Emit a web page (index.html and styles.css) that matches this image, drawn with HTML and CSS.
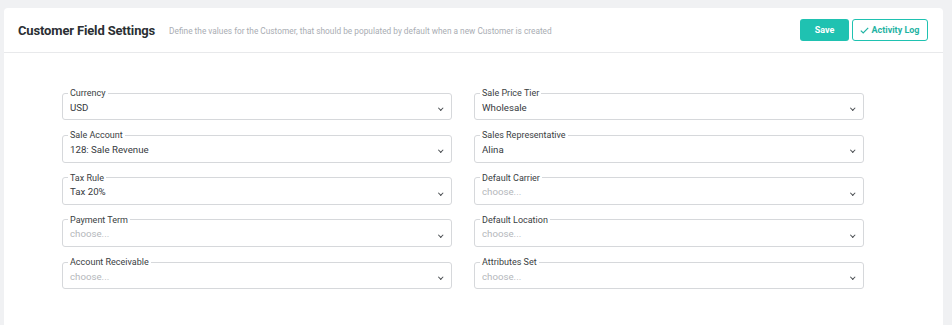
FILE: index.html
```html
<!DOCTYPE html>
<html lang="en">
<head>
  <meta charset="UTF-8" />
  <title>Customer Field Settings</title>
  <link rel="stylesheet" href="styles.css">
</head>
<body>

<div class="card">
  <header class="card-head">
    <h1>Customer Field Settings</h1>
    <p class="hint">Define the values for the Customer, that should be populated by default when a new Customer is created</p>
    <div class="actions">
      <button class="btn btn-save">Save</button>
      <button class="btn btn-log">
        <svg width="9" height="7" viewBox="0 0 9 7"><polyline points="0.8,3.6 3.2,6 8.2,0.8" fill="none" stroke="currentColor" stroke-width="1.2"/></svg>
        Activity Log
      </button>
    </div>
  </header>

  <div class="fields">
    <fieldset class="field">
      <legend>Currency</legend>
      <div class="value">USD</div>
    </fieldset>
    <fieldset class="field">
      <legend>Sale Price Tier</legend>
      <div class="value">Wholesale</div>
    </fieldset>

    <fieldset class="field">
      <legend>Sale Account</legend>
      <div class="value">128: Sale Revenue</div>
    </fieldset>
    <fieldset class="field">
      <legend>Sales Representative</legend>
      <div class="value">Alina</div>
    </fieldset>

    <fieldset class="field">
      <legend>Tax Rule</legend>
      <div class="value">Tax 20%</div>
    </fieldset>
    <fieldset class="field">
      <legend>Default Carrier</legend>
      <div class="value empty">choose...</div>
    </fieldset>

    <fieldset class="field">
      <legend>Payment Term</legend>
      <div class="value empty">choose...</div>
    </fieldset>
    <fieldset class="field">
      <legend>Default Location</legend>
      <div class="value empty">choose...</div>
    </fieldset>

    <fieldset class="field">
      <legend>Account Receivable</legend>
      <div class="value empty">choose...</div>
    </fieldset>
    <fieldset class="field">
      <legend>Attributes Set</legend>
      <div class="value empty">choose...</div>
    </fieldset>
  </div>
</div>

</body>
</html>
```

FILE: styles.css
```css
html, body {
  overflow: hidden;
}

body {
  margin: 0;
  padding: 8px 9px 0 4px;
  background-color: #f0f1f3;
  font-family: Roboto, "Liberation Sans", sans-serif;
  color: #2b2f33;
}

.card {
  background-color: #fff;
  border-radius: 4px 4px 0 0;
  height: 317px;
}

.card-head {
  display: flex;
  align-items: center;
  height: 44px;
  padding: 0 15px 0 14px;
  border-bottom: 1px solid #e8e9eb;
}

.card-head h1 {
  margin: 0;
  font-size: 13px;
  font-weight: 700;
  letter-spacing: -0.15px;
  color: #2b2f33;
}

.hint {
  margin: 1px 0 0 14px;
  font-size: 8.3px;
  color: #a9adb3;
}

.actions {
  margin-left: auto;
  display: flex;
  gap: 3px;
}

.btn {
  height: 22px;
  border-radius: 3px;
  font-family: inherit;
  font-size: 9px;
  font-weight: 700;
  cursor: pointer;
}

.btn-save {
  width: 49px;
  background-color: #1fc2b1;
  border: none;
  color: #fff;
}

.btn-log {
  width: 76px;
  background-color: #fff;
  border: 1px solid #1fc2b1;
  color: #1fb3a3;
  display: flex;
  align-items: center;
  justify-content: center;
  gap: 2px;
  padding: 0;
}

.fields {
  display: grid;
  grid-template-columns: 390px 390px;
  column-gap: 22px;
  row-gap: 10px;
  padding: 35px 0 0 58px;
}

.field {
  margin: 0;
  padding: 0 10px 4.8px 7px;
  border: 1px solid #d6d8db;
  border-radius: 3px;
  position: relative;
}

.field legend {
  font-size: 9px;
  line-height: 10px;
  padding: 0 2px;
  margin-left: -2px;
  color: #3a3e42;
}

.value {
  font-size: 9.7px;
  line-height: 15px;
  margin-top: 1.5px;
  color: #363a3e;
}

.value.empty {
  color: #b4b7bb;
}

.field::after {
  content: "";
  position: absolute;
  right: 9px;
  top: 8px;
  width: 2.5px;
  height: 2.5px;
  border-right: 1.6px solid #484c50;
  border-bottom: 1.6px solid #484c50;
  transform: rotate(45deg);
}
```
